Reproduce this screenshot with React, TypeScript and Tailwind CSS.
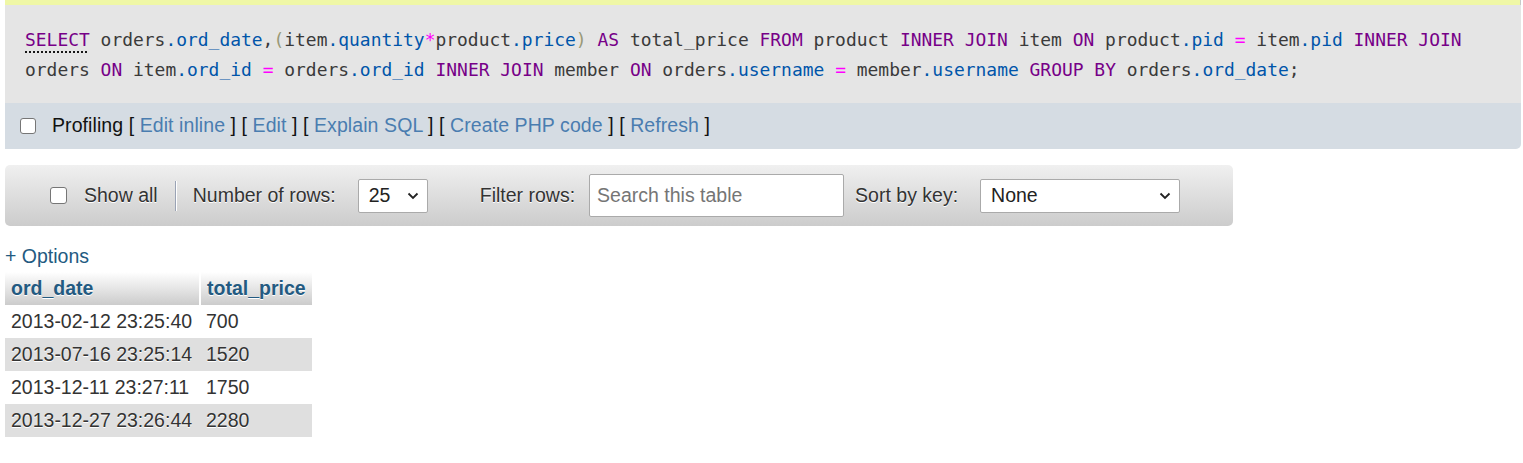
import React from "react";

const K = ({ children }: { children: React.ReactNode }) => (
  <span className="text-[#770088]">{children}</span>
);
const V = ({ children }: { children: React.ReactNode }) => (
  <span className="text-[#0055aa]">{children}</span>
);
const O = ({ children }: { children: React.ReactNode }) => (
  <span className="text-[#ff00ff]">{children}</span>
);
const B = ({ children }: { children: React.ReactNode }) => (
  <span className="text-[#999977]">{children}</span>
);

const Chevron = () => (
  <svg width="12" height="8" viewBox="0 0 12 8" className="shrink-0">
    <path d="M1.5 1.5 L6 6 L10.5 1.5" fill="none" stroke="#222" strokeWidth="1.8" />
  </svg>
);

const Link = ({ children }: { children: React.ReactNode }) => (
  <span className="text-[#4a7db0]">{children}</span>
);

export default function App() {
  const rows = [
    ["2013-02-12 23:25:40", "700"],
    ["2013-07-16 23:25:14", "1520"],
    ["2013-12-11 23:27:11", "1750"],
    ["2013-12-27 23:26:44", "2280"],
  ];
  return (
    <div className="w-[1523px] h-[463px] bg-white text-[#333] font-['Liberation_Sans',Arial,sans-serif] text-[19.5px] overflow-hidden">
      <div className="ml-[5px] mr-[2px]">
        <div className="h-[5px] bg-[#eff7a6] border-r border-[#c8c8c8]" />
        <div className="bg-[#e5e5e5] pl-[20px] pt-[20px] pb-[18px] font-['DejaVu_Sans_Mono',monospace] text-[17.95px] leading-[30px] text-[#3a3a3a] whitespace-pre">
          <div>
            <span className="text-[#770088] underline decoration-dotted decoration-black underline-offset-[6px]">SELECT</span>
            {" orders"}<V>.ord_date</V>{","}<B>(</B>{"item"}<V>.quantity</V><O>*</O>{"product"}<V>.price</V><B>)</B>{" "}<K>AS</K>{" total_price "}<K>FROM</K>{" product "}<K>INNER JOIN</K>{" item "}<K>ON</K>{" product"}<V>.pid</V>{" "}<O>=</O>{" item"}<V>.pid</V>{" "}<K>INNER JOIN</K>
          </div>
          <div>
            {"orders "}<K>ON</K>{" item"}<V>.ord_id</V>{" "}<O>=</O>{" orders"}<V>.ord_id</V>{" "}<K>INNER JOIN</K>{" member "}<K>ON</K>{" orders"}<V>.username</V>{" "}<O>=</O>{" member"}<V>.username</V>{" "}<K>GROUP BY</K>{" orders"}<V>.ord_date</V>{";"}
          </div>
        </div>
        <div className="h-[46px] bg-[#d5dce3] rounded-br-[5px] flex items-center pl-[15px] text-[#111]">
          <div className="w-[16px] h-[16px] border-[1.5px] border-[#767676] rounded-[3px] bg-white shrink-0" />
          <span className="ml-[16px] whitespace-pre tracking-[0.08px]">
            {"Profiling [ "}<Link>Edit inline</Link>{" ] [ "}<Link>Edit</Link>{" ] [ "}<Link>Explain SQL</Link>{" ] [ "}<Link>Create PHP code</Link>{" ] [ "}<Link>Refresh</Link>{" ]"}
          </span>
        </div>
      </div>

      <div className="ml-[5px] mt-[16px] w-[1228px] h-[61px] rounded-[5px] bg-gradient-to-b from-[#f0f0f0] to-[#cccccc] flex items-center pl-[45px] [text-shadow:0_1px_0_#fff]">
        <div className="w-[17px] h-[17px] border-[1.5px] border-[#767676] rounded-[3px] bg-white shrink-0" />
        <span className="ml-[17px]">Show all</span>
        <div className="ml-[17px] h-[30px] w-[2px] border-l border-[#9aa3b5] border-r border-r-white" />
        <span className="ml-[16px]">Number of rows:</span>
        <div className="ml-[22px] w-[70px] h-[34px] bg-white border border-[#aaa] rounded-[2px] flex items-center justify-between pl-[10px] pr-[8px] text-[#222] [text-shadow:none]">
          <span>25</span>
          <Chevron />
        </div>
        <span className="ml-[52px]">Filter rows:</span>
        <input
          className="ml-[14px] w-[255px] h-[43px] bg-white border border-[#aaa] rounded-[2px] px-[7px] text-[19.5px] placeholder:text-[#757575] outline-none [text-shadow:none]"
          placeholder="Search this table"
        />
        <span className="ml-[11px]">Sort by key:</span>
        <div className="ml-[22px] w-[200px] h-[34px] bg-white border border-[#aaa] rounded-[2px] flex items-center justify-between pl-[10px] pr-[8px] text-[#222] [text-shadow:none]">
          <span>None</span>
          <Chevron />
        </div>
      </div>

      <div className="ml-[5px] mt-[18px] leading-[24px] text-[#235a81]">+ Options</div>

      <table className="ml-[5px] mt-[4px] border-collapse">
        <thead>
          <tr>
            <th className="h-[33px] px-[6px] text-left font-bold text-[#235a81] bg-gradient-to-b from-white to-[#cccccc] border-r-2 border-white [text-shadow:0_1px_0_#fff] w-[195px]">
              ord_date
            </th>
            <th className="h-[33px] px-[6px] text-left font-bold text-[#235a81] bg-gradient-to-b from-white to-[#cccccc] [text-shadow:0_1px_0_#fff]">
              total_price
            </th>
          </tr>
        </thead>
        <tbody>
          {rows.map((r, i) => (
            <tr key={i} className={i % 2 === 1 ? "bg-[#dfdfdf]" : "bg-white"}>
              <td className="h-[33px] px-[6px] [text-shadow:0_1px_0_#fff]">{r[0]}</td>
              <td className="h-[33px] px-[6px] [text-shadow:0_1px_0_#fff]">{r[1]}</td>
            </tr>
          ))}
        </tbody>
      </table>
    </div>
  );
}
